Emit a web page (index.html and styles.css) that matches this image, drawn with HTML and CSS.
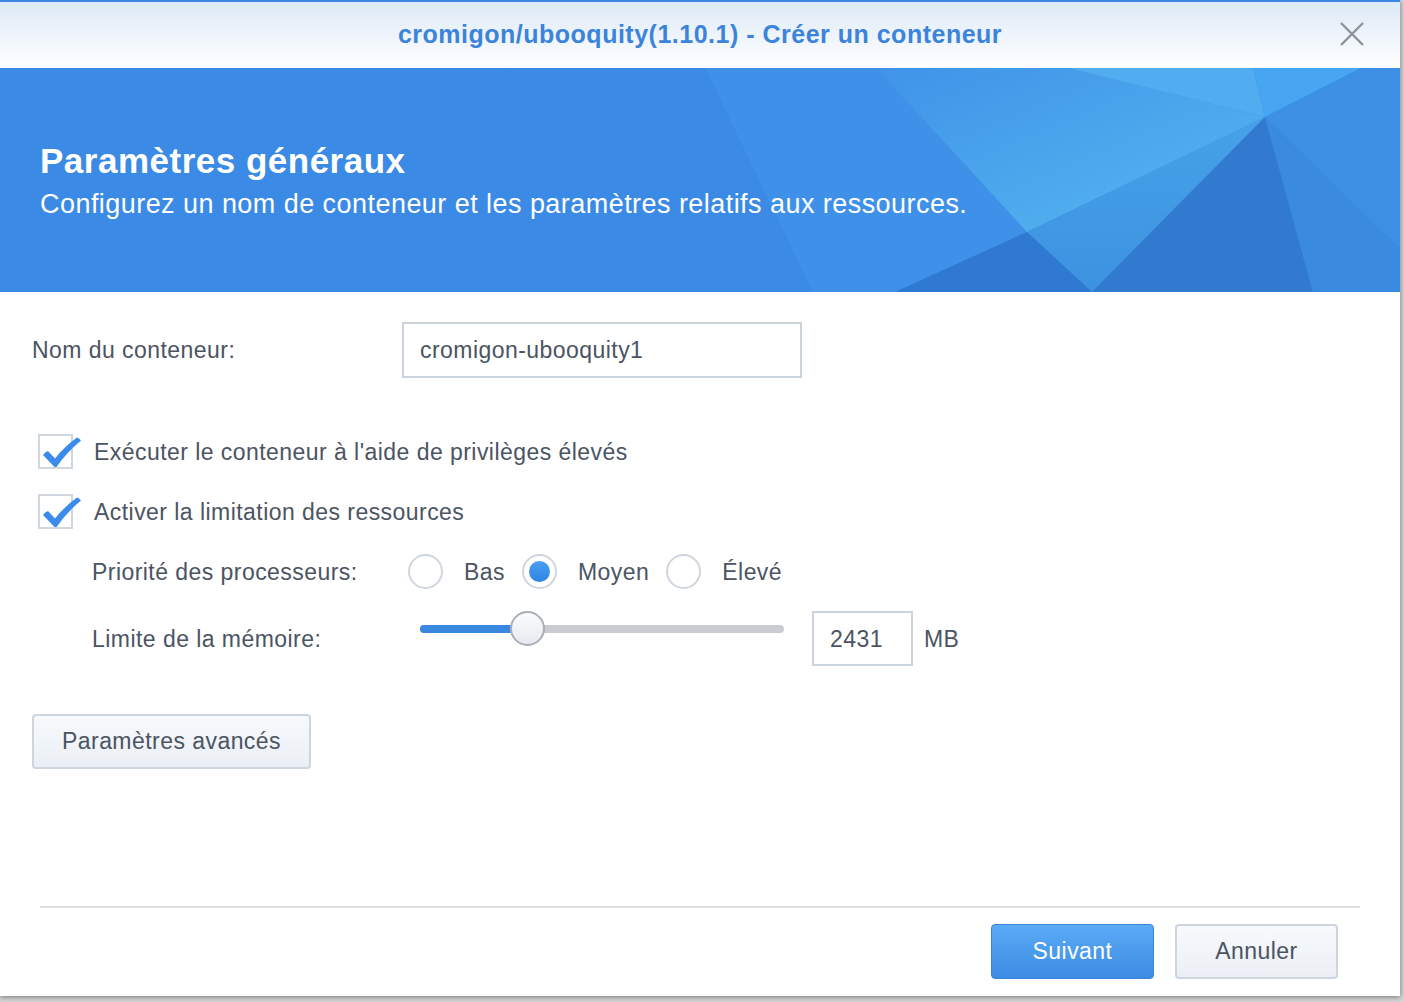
FILE: index.html
```html
<!DOCTYPE html>
<html lang="fr">
<head>
<meta charset="utf-8">
<title>Créer un conteneur</title>
<link rel="stylesheet" href="styles.css">
</head>
<body>
<div class="dialog">
  <header class="titlebar">
    <span></span>
    <h1 class="title">cromigon/ubooquity(1.10.1) - Créer un conteneur</h1>
    <button class="close" aria-label="Fermer">
      <svg width="26" height="26" viewBox="0 0 26 26"><path d="M2 2 L24 24 M24 2 L2 24" stroke="#8d9298" stroke-width="2.4" fill="none"/></svg>
    </button>
  </header>

  <section class="banner">
    <svg class="banner-bg" viewBox="0 0 1400 224" preserveAspectRatio="none" aria-hidden="true">
      <defs>
        <linearGradient id="g1" x1="0" y1="0" x2="1" y2="1">
          <stop offset="0" stop-color="#4093e8"/>
          <stop offset="1" stop-color="#56b8f0"/>
        </linearGradient>
        <linearGradient id="g2" x1="0" y1="0" x2="0" y2="1">
          <stop offset="0" stop-color="#46a2e8"/>
          <stop offset="1" stop-color="#3d92e0"/>
        </linearGradient>
      </defs>
      <rect x="0" y="0" width="1400" height="224" fill="#3b8ae5"/>
      <polygon points="705,0 876,0 1027,164 895,224 813,224" fill="#3e90e8"/>
      <polygon points="876,0 1068,0 1265,49 1027,164" fill="url(#g1)"/>
      <polygon points="1068,0 1253,0 1265,49" fill="#52acf0"/>
      <polygon points="1253,0 1361,0 1265,49" fill="#48a5f2"/>
      <polygon points="1361,0 1400,0 1400,181 1265,49" fill="#3d90e3"/>
      <polygon points="1027,164 1265,49 1092,224" fill="url(#g2)"/>
      <polygon points="895,224 1027,164 1092,224" fill="#3079d3"/>
      <polygon points="1265,49 1092,224 1313,224" fill="#3279d0"/>
      <polygon points="1265,49 1313,224 1400,224 1400,181" fill="#3a8ae0"/>
    </svg>
    <div class="banner-text">
      <h2 class="banner-title">Paramètres généraux</h2>
      <p class="banner-sub">Configurez un nom de conteneur et les paramètres relatifs aux ressources.</p>
    </div>
  </section>

  <main class="content">
    <div class="row name-row">
      <label class="label name-label">Nom du conteneur:</label>
      <div class="textbox name-box">cromigon-ubooquity1</div>
    </div>

    <div class="row check-row first-check">
      <span class="checkbox">
        <svg width="44" height="40" viewBox="0 0 44 40"><path d="M3 19 Q5 16 8 15 L15 22.5 Q25 10 37 1.5 Q39 2 41 4.5 Q27 16 16.5 31 L14.5 31 Z" fill="#3a8bec"/></svg>
      </span>
      <span class="label">Exécuter le conteneur à l'aide de privilèges élevés</span>
    </div>

    <div class="row check-row">
      <span class="checkbox">
        <svg width="44" height="40" viewBox="0 0 44 40"><path d="M3 19 Q5 16 8 15 L15 22.5 Q25 10 37 1.5 Q39 2 41 4.5 Q27 16 16.5 31 L14.5 31 Z" fill="#3a8bec"/></svg>
      </span>
      <span class="label">Activer la limitation des ressources</span>
    </div>

    <div class="row sub-row radio-row">
      <span class="label sub-label">Priorité des processeurs:</span>
      <div class="radios">
        <span class="radio"></span><span class="label radio-text">Bas</span>
        <span class="radio checked"></span><span class="label radio-text">Moyen</span>
        <span class="radio"></span><span class="label radio-text">Élevé</span>
      </div>
    </div>

    <div class="row sub-row slider-row">
      <span class="label sub-label">Limite de la mémoire:</span>
      <div class="slider">
        <div class="track"><div class="fill" style="width: 108px"></div></div>
        <span class="thumb" style="left: 102px"></span>
      </div>
      <div class="textbox num-box">2431</div>
      <span class="label unit">MB</span>
    </div>

    <div class="row adv-row">
      <button class="btn adv">Paramètres avancés</button>
    </div>
  </main>

  <footer class="footer">
    <button class="btn primary">Suivant</button>
    <button class="btn">Annuler</button>
  </footer>
</div>
</body>
</html>
```

FILE: styles.css
```css
* { box-sizing: border-box; }

html, body {
  margin: 0;
  padding: 0;
}

body {
  width: 1404px;
  height: 1002px;
  background: #d4d4d4;
  font-family: "Liberation Sans", Arial, sans-serif;
  color: #4b5462;
  overflow: hidden;
}

.dialog {
  width: 1400px;
  height: 996px;
  background: #ffffff;
  display: flex;
  flex-direction: column;
  box-shadow: 0 1px 5px rgba(0, 0, 0, 0.45);
}

.titlebar {
  height: 68px;
  border-top: 2px solid #3b86df;
  background: linear-gradient(#dde9f7, #ffffff);
  display: grid;
  grid-template-columns: 1fr auto 1fr;
  align-items: center;
}

.title {
  margin: 0;
  font-size: 25px;
  letter-spacing: 0.5px;
  font-weight: bold;
  color: #3b84da;
  line-height: 30px;
  padding-bottom: 2px;
}

.close {
  justify-self: end;
  margin-right: 35px;
  width: 26px;
  height: 26px;
  padding: 0;
  border: 0;
  background: transparent;
  display: flex;
  margin-bottom: 2px;
}

.banner {
  position: relative;
  height: 224px;
  overflow: hidden;
  background: #3b8ae5;
}

.banner-bg {
  position: absolute;
  left: 0;
  top: 0;
  width: 100%;
  height: 100%;
}

.banner-text {
  position: relative;
  padding: 73px 0 0 40px;
  color: #ffffff;
}

.banner-title {
  margin: 0 0 8px;
  font-size: 35px;
  line-height: 40px;
  letter-spacing: 0.5px;
  font-weight: bold;
}

.banner-sub {
  margin: 0;
  font-size: 27px;
  line-height: 30px;
  letter-spacing: 0.45px;
}

.content {
  flex: 1;
  padding: 30px 32px 0;
  display: flex;
  flex-direction: column;
}

.row {
  display: flex;
  align-items: center;
}

.label {
  font-size: 23px;
  line-height: 28px;
  letter-spacing: 0.45px;
  color: #4b5462;
}

.name-row { height: 56px; }

.name-label { width: 370px; }

.textbox {
  border: 2px solid #cbd3dc;
  background: #fff;
  font-size: 23px;
  line-height: 28px;
  letter-spacing: 0.45px;
  color: #4b5462;
  display: flex;
  align-items: center;
  padding-left: 16px;
}

.name-box {
  width: 400px;
  height: 56px;
}

.check-row {
  height: 35px;
  margin-top: 25px;
}

.first-check { margin-top: 56px; }

.checkbox {
  position: relative;
  width: 35px;
  height: 35px;
  margin-left: 6px;
  margin-right: 21px;
  border: 2px solid #cfd6de;
  background: #fff;
  flex: none;
}

.checkbox svg {
  position: absolute;
  left: 0;
  top: 0;
}

.sub-row { padding-left: 60px; }

.radio-row {
  height: 35px;
  margin-top: 25px;
}

.sub-label { width: 316px; }

.radios {
  display: flex;
  align-items: center;
}

.radio {
  width: 35px;
  height: 35px;
  border-radius: 50%;
  border: 2px solid #cfd6de;
  background: #fff;
  margin-right: 21px;
  display: flex;
  align-items: center;
  justify-content: center;
  flex: none;
}

.radio.checked::after {
  content: "";
  width: 21px;
  height: 21px;
  border-radius: 50%;
  background: linear-gradient(#4c9cf0, #2f85e6);
}

.radio-text { margin-right: 17px; }

.slider-row {
  height: 55px;
  margin-top: 22px;
  align-items: flex-start;
}

.slider-row .sub-label,
.slider-row .unit {
  align-self: center;
}

.slider {
  position: relative;
  width: 376px;
  height: 35px;
  padding-left: 12px;
  display: flex;
  align-items: center;
  margin-right: 28px;
}

.track {
  width: 364px;
  height: 8px;
  border-radius: 4px;
  background: #c9ccd1;
  overflow: hidden;
}

.fill {
  height: 100%;
  background: #3a87df;
}

.thumb {
  position: absolute;
  top: 0;
  width: 35px;
  height: 35px;
  border-radius: 50%;
  border: 2px solid #a8afb7;
  background: linear-gradient(#fbfcfd, #e6eaef);
}

.num-box {
  width: 101px;
  height: 55px;
}

.unit { margin-left: 11px; }

.adv-row { margin-top: 48px; }

.btn {
  font-family: "Liberation Sans", Arial, sans-serif;
  font-size: 23px;
  letter-spacing: 0.45px;
  color: #4b5462;
  height: 55px;
  border: 2px solid #cdd5de;
  border-radius: 4px;
  background: linear-gradient(#f7f9fc, #ebeff5);
  padding: 0;
}

.adv {
  width: 279px;
}

.footer {
  margin: 0 40px;
  border-top: 2px solid #e1e1e1;
  padding: 16px 22px 17px 0;
  display: flex;
  justify-content: flex-end;
  gap: 21px;
}

.footer .btn { width: 163px; }

.btn.primary {
  color: #ffffff;
  border: 1px solid #3a83d8;
  background: linear-gradient(#5aaaf6, #3c8ce4);
}
```
